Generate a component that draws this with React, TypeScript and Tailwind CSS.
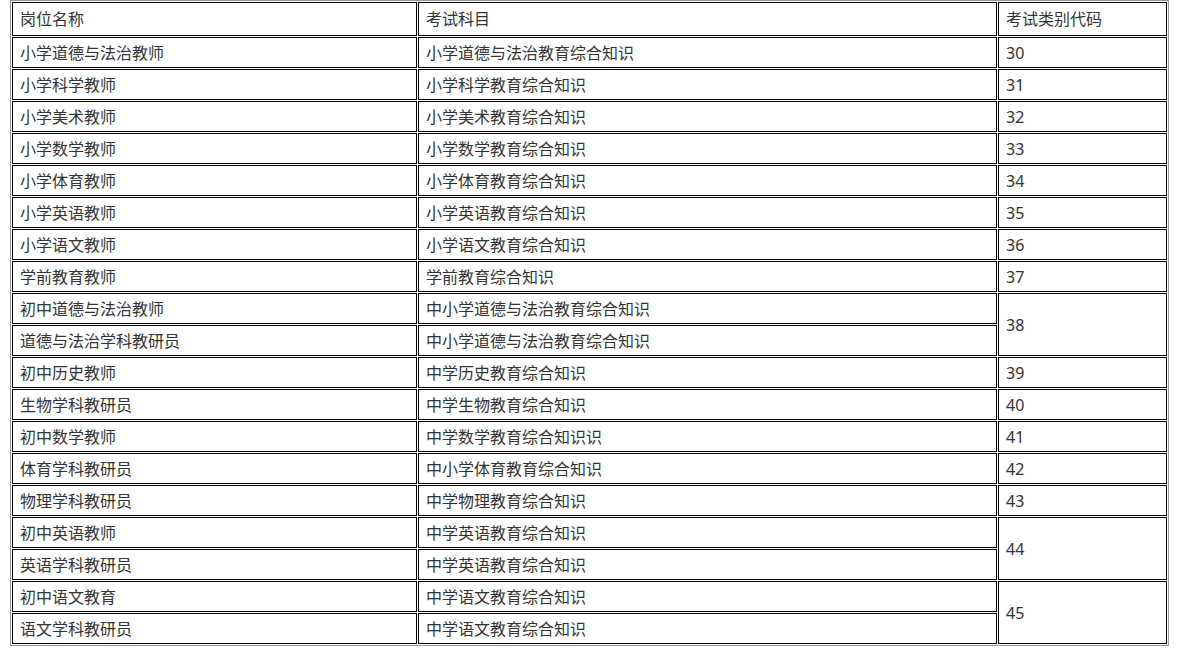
import React from "react";

type Row = { a: string; b: string; c?: string; span?: number };

const rows: Row[] = [
  { a: "小学道德与法治教师", b: "小学道德与法治教育综合知识", c: "30" },
  { a: "小学科学教师", b: "小学科学教育综合知识", c: "31" },
  { a: "小学美术教师", b: "小学美术教育综合知识", c: "32" },
  { a: "小学数学教师", b: "小学数学教育综合知识", c: "33" },
  { a: "小学体育教师", b: "小学体育教育综合知识", c: "34" },
  { a: "小学英语教师", b: "小学英语教育综合知识", c: "35" },
  { a: "小学语文教师", b: "小学语文教育综合知识", c: "36" },
  { a: "学前教育教师", b: "学前教育综合知识", c: "37" },
  { a: "初中道德与法治教师", b: "中小学道德与法治教育综合知识", c: "38", span: 2 },
  { a: "道德与法治学科教研员", b: "中小学道德与法治教育综合知识" },
  { a: "初中历史教师", b: "中学历史教育综合知识", c: "39" },
  { a: "生物学科教研员", b: "中学生物教育综合知识", c: "40" },
  { a: "初中数学教师", b: "中学数学教育综合知识识", c: "41" },
  { a: "体育学科教研员", b: "中小学体育教育综合知识", c: "42" },
  { a: "物理学科教研员", b: "中学物理教育综合知识", c: "43" },
  { a: "初中英语教师", b: "中学英语教育综合知识", c: "44", span: 2 },
  { a: "英语学科教研员", b: "中学英语教育综合知识" },
  { a: "初中语文教育", b: "中学语文教育综合知识", c: "45", span: 2 },
  { a: "语文学科教研员", b: "中学语文教育综合知识" },
];

const cell =
  "border border-black px-[7px] py-0 align-middle text-left font-normal whitespace-nowrap";

export default function App() {
  return (
    <div
      className="w-[1181px] h-[661px] bg-white pl-[10px] text-[16px] leading-[20px] text-[#333]"
      style={{ fontFamily: '"Noto Sans", "Noto Sans CJK SC", sans-serif' }}
    >
      <table className="table-fixed w-[1159px] border border-[#999] border-separate border-spacing-[1px]">
        <tbody>
          <tr className="h-[34px]">
            <td className={`${cell} w-[405px]`}>岗位名称</td>
            <td className={`${cell} w-[579px]`}>考试科目</td>
            <td className={`${cell} w-[169px]`}>考试类别代码</td>
          </tr>
          {rows.map((r, i) => (
            <tr key={i} className="h-[31px]">
              <td className={cell}>{r.a}</td>
              <td className={cell}>{r.b}</td>
              {r.c !== undefined && (
                <td className={cell} rowSpan={r.span ?? 1}>
                  {r.c}
                </td>
              )}
            </tr>
          ))}
        </tbody>
      </table>
    </div>
  );
}
